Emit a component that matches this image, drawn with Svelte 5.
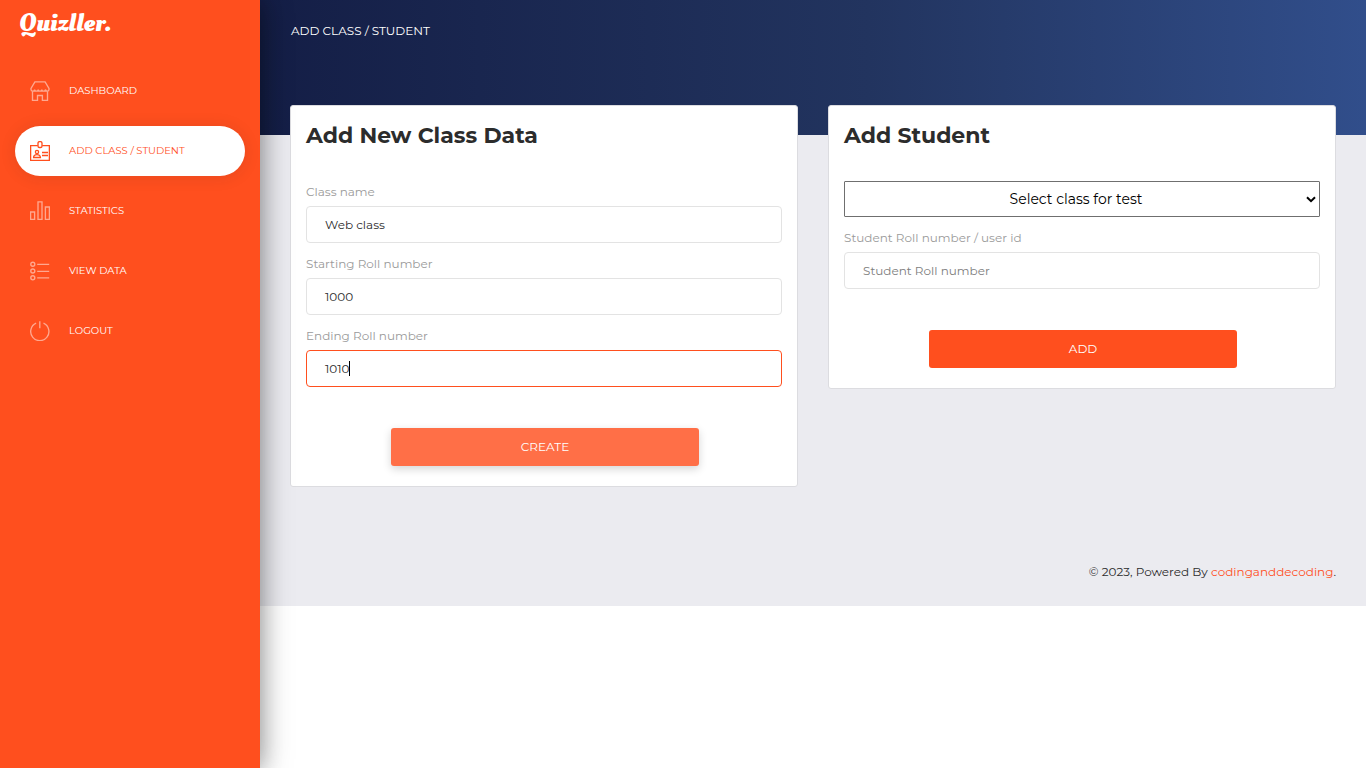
<script>
  const nav = [
    { label: 'DASHBOARD', icon: 'shop' },
    { label: 'ADD CLASS / STUDENT', icon: 'badge', active: true },
    { label: 'STATISTICS', icon: 'chart' },
    { label: 'VIEW DATA', icon: 'list' },
    { label: 'LOGOUT', icon: 'power' }
  ];
  const fields = [
    { label: 'Class name', value: 'Web class' },
    { label: 'Starting Roll number', value: '1000' },
    { label: 'Ending Roll number', value: '1010', focused: true }
  ];
</script>

<div class="wrapper">
  <aside class="sidebar">
    <div class="logo">Quizller.</div>
    <nav>
      {#each nav as item}
        <a href="#top" class="item" class:active={item.active}>
          <svg viewBox="0 0 20 20" width="20" height="20">
            {#if item.icon === 'shop'}
              <path d="M4.9 .9h10.2l3.9 6.6v.9c0 2.4-3.5 2.4-3.6 0 0 2.4-3.6 2.4-3.6 0 0 2.4-3.6 2.4-3.6 0 0 2.4-3.6 2.4-3.6 0 0 2.4-3.6 2.4-3.6 0v-.9zM2.5 10v9.4h5v-4.9h4.9v4.9h5.1V10" />
            {:else if item.icon === 'badge'}
              <path d="M7.8 4.6H.6v14.8h18.8V4.6h-7.2" />
              <rect x="8" y=".6" width="4" height="5.9" rx="1.6" />
              <circle cx="7" cy="11" r="1.6" />
              <path d="M3.6 16.5c0-3.9 6.8-3.9 6.8 0zM12 11.5h6M12 14.5h6" />
            {:else if item.icon === 'chart'}
              <path d="M.6 11h4v7.4h-4zM8 .9h4v17.5H8zM15.4 6h4v12.4h-4z" />
            {:else if item.icon === 'list'}
              <circle cx="2.8" cy="3.2" r="2" />
              <circle cx="2.8" cy="10" r="2" />
              <circle cx="2.8" cy="16.8" r="2" />
              <path d="M7.2 3.3h12M7.2 10.3h12M7.2 16.8h12" />
            {:else}
              <path d="M6.1 2.2a9.1 9.1 0 1 0 7.4 0M9.8 .2v7" />
            {/if}
          </svg>
          <span>{item.label}</span>
        </a>
      {/each}
    </nav>
  </aside>

  <main>
    <header><span>ADD CLASS / STUDENT</span></header>

    <div class="content">
      <section class="card">
        <h2>Add New Class Data</h2>
        <div class="fields">
          {#each fields as f}
            <div class="group">
              <span class="label">{f.label}</span>
              <div class="control" class:focused={f.focused}>
                {f.value}{#if f.focused}<i class="caret"></i>{/if}
              </div>
            </div>
          {/each}
        </div>
        <button class="btn hover">CREATE</button>
      </section>

      <section class="card">
        <h2>Add Student</h2>
        <div class="fields">
          <div class="select">
            <span>Select class for test</span>
            <svg viewBox="0 0 10 7" width="10" height="7"><path d="M1 1.2l4 4 4-4" /></svg>
          </div>
          <div class="group">
            <span class="label">Student Roll number / user id</span>
            <div class="control placeholder">Student Roll number</div>
          </div>
        </div>
        <button class="btn">ADD</button>
      </section>
    </div>

    <footer>
      <span>© 2023, Powered By <a href="#top">codinganddecoding</a>.</span>
    </footer>
  </main>
</div>

<style>
  :global(body) {
    background: #fff;
    overflow: hidden;
  }
  .wrapper {
    display: flex;
    align-items: flex-start;
    height: 768px;
    font-family: Montserrat, Inter, sans-serif;
    font-size: 12px;
    color: #2c2c2c;
  }
  * {
    box-sizing: border-box;
  }
  a {
    text-decoration: none;
  }
  .sidebar {
    position: relative;
    z-index: 2;
    flex: none;
    width: 260px;
    height: 768px;
    background: #ff4f1e;
    box-shadow: 0 2px 22px 0 rgba(0, 0, 0, 0.2), 0 2px 30px 0 rgba(0, 0, 0, 0.35);
  }
  .logo {
    height: 66px;
    padding: 10px 0 0 19px;
    font: bold 25.6px/26px "Oleo Script", "DejaVu Serif", serif;
    color: #fff;
  }
  nav {
    display: flex;
    flex-direction: column;
    gap: 10px;
    padding: 0 15px;
  }
  .item {
    display: flex;
    align-items: center;
    gap: 19px;
    height: 50px;
    padding-left: 15px;
    border-radius: 30px;
    font-size: 10px;
    color: #fff;
    white-space: nowrap;
  }
  .item span {
    position: relative;
    top: -1px;
  }
  .item svg {
    opacity: 0.5;
  }
  .item.active {
    background: #fff;
    color: #ff4f1e;
    box-shadow: 0 1px 15px 1px rgba(39, 39, 39, 0.1);
  }
  .item.active svg {
    opacity: 1;
  }
  svg {
    fill: none;
    stroke: currentColor;
    stroke-width: 1.35;
  }
  main {
    flex: 1;
    height: 606px;
    background: #ebebf0;
  }
  header {
    height: 135px;
    padding: 23px 31px;
    background: linear-gradient(to right, #141e46 0%, #22345f 55%, #314e8b 100%);
    line-height: 16px;
    color: #fff;
  }
  .content {
    display: flex;
    align-items: flex-start;
    gap: 30px;
    height: 457px;
    margin-top: -30px;
    padding: 0 30px;
  }
  .card {
    display: flex;
    flex-direction: column;
    flex: 1;
    padding: 14px 15px 20px;
    border: 1px solid #dcdce0;
    border-radius: 3px;
    background: #fff;
  }
  h2 {
    margin: 0;
    height: 61px;
    font-size: 22px;
    line-height: 31px;
  }
  .fields {
    display: flex;
    flex-direction: column;
    gap: 10px;
  }
  .group {
    display: flex;
    flex-direction: column;
  }
  .label {
    height: 25px;
    line-height: 22px;
    color: #9a9a9a;
  }
  .control {
    display: flex;
    align-items: center;
    height: 37px;
    padding: 0 18px;
    border: 1px solid #e3e3e3;
    border-radius: 4px;
  }
  .control.focused {
    border-color: #ff4f1e;
  }
  .control.placeholder {
    color: #7d7d7d;
  }
  .caret {
    width: 1px;
    height: 15px;
    margin-left: -1px;
    background: #000;
  }
  .select {
    display: flex;
    align-items: center;
    height: 36px;
    padding: 0 3px 0 1px;
    border: 1px solid #6f6f6f;
    border-radius: 1px;
    font-size: 14px;
    color: #000;
  }
  .select span {
    flex: 1;
    text-align: center;
  }
  .select svg {
    stroke: #000;
    stroke-width: 2;
  }
  .btn {
    width: 308px;
    height: 38px;
    margin: 41px 0 0 85px;
    padding: 0 0 1px;
    border: 0;
    border-radius: 3px;
    background: #ff4f1e;
    color: #fff;
    font: inherit;
  }
  .btn.hover {
    background: #ff6f47;
    box-shadow: 0 3px 8px 0 rgba(0, 0, 0, 0.17);
  }
  footer {
    display: flex;
    justify-content: flex-end;
    padding: 2px 30px;
    line-height: 16px;
  }
  footer a {
    color: #ff4f1e;
  }
</style>
